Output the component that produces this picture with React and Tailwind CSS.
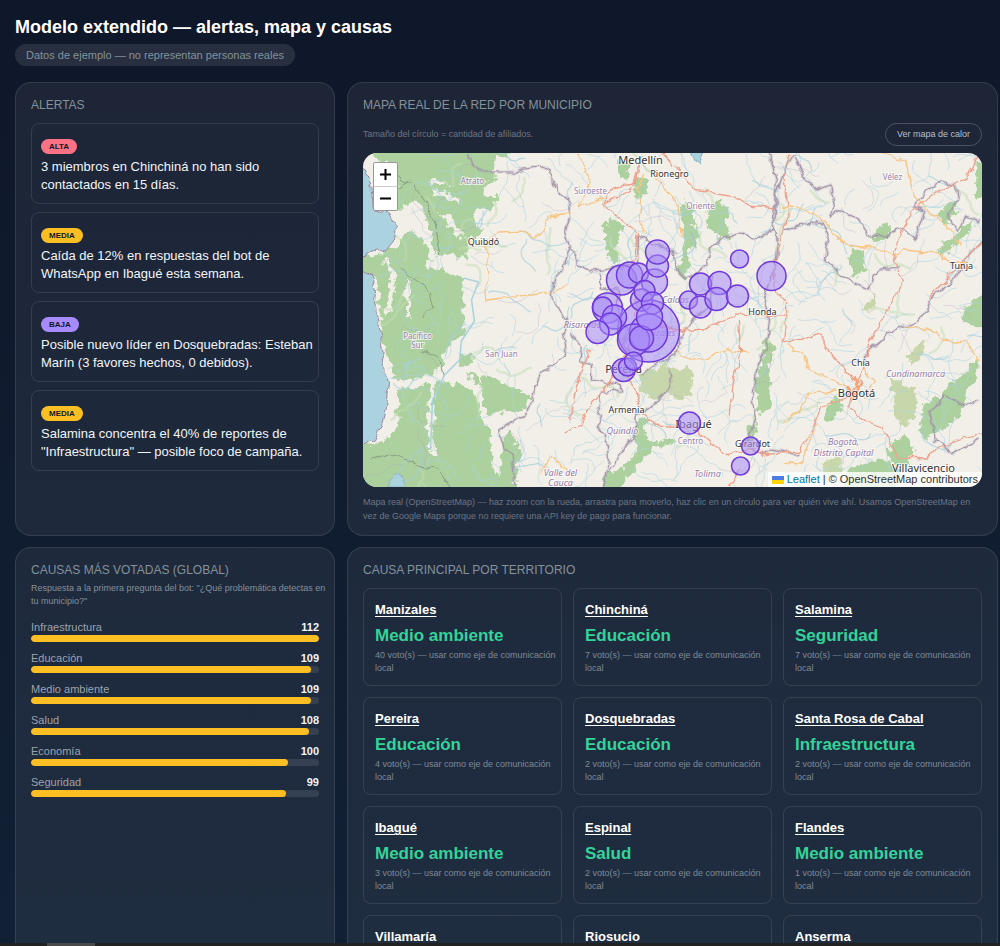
import React from "react";

const ALERTS = [
  { level: "ALTA", tone: "bg-[#fb7185]", text: "3 miembros en Chinchiná no han sido contactados en 15 días." },
  { level: "MEDIA", tone: "bg-[#fbbf24]", text: "Caída de 12% en respuestas del bot de WhatsApp en Ibagué esta semana." },
  { level: "BAJA", tone: "bg-[#a78bfa]", text: "Posible nuevo líder en Dosquebradas: Esteban Marín (3 favores hechos, 0 debidos)." },
  { level: "MEDIA", tone: "bg-[#fbbf24]", text: "Salamina concentra el 40% de reportes de \"Infraestructura\" — posible foco de campaña." },
];

const CAUSES = [
  { label: "Infraestructura", votes: 112 },
  { label: "Educación", votes: 109 },
  { label: "Medio ambiente", votes: 109 },
  { label: "Salud", votes: 108 },
  { label: "Economía", votes: 100 },
  { label: "Seguridad", votes: 99 },
];

const TERRITORIES = [
  { name: "Manizales", cause: "Medio ambiente", votes: 40 },
  { name: "Chinchiná", cause: "Educación", votes: 7 },
  { name: "Salamina", cause: "Seguridad", votes: 7 },
  { name: "Pereira", cause: "Educación", votes: 4 },
  { name: "Dosquebradas", cause: "Educación", votes: 2 },
  { name: "Santa Rosa de Cabal", cause: "Infraestructura", votes: 2 },
  { name: "Ibagué", cause: "Medio ambiente", votes: 3 },
  { name: "Espinal", cause: "Salud", votes: 2 },
  { name: "Flandes", cause: "Medio ambiente", votes: 1 },
  { name: "Villamaría" },
  { name: "Riosucio" },
  { name: "Anserma" },
];

// [x, y, radius]
const MEMBERS = [
  [648, 331, 31], [648, 333, 19], [633, 340, 16], [641, 338, 12], [607, 308, 15],
  [621, 280, 15], [629, 275, 13], [638, 273, 10], [654, 282, 13], [657, 266, 11],
  [657, 252, 12], [641, 300, 11], [644, 291, 10.5], [652, 303, 11], [649, 317, 13],
  [602, 307, 10], [614, 317, 12], [610, 324, 11], [597, 332, 11.5], [623, 370, 11.5],
  [627, 367, 9], [633, 361, 9], [700, 284, 11], [719, 283, 11.5], [688, 300, 9],
  [700, 307, 11], [716, 299, 11.5], [737, 296, 11], [739, 259, 9], [771, 276, 14.5],
  [689, 423, 11], [750, 446, 9], [740, 466, 9],
];

const CITIES = [
  ["Medellín", 640, 164, 11], ["Rionegro", 669, 177, 9], ["Quibdó", 483, 245, 9],
  ["Tunja", 961, 269, 9], ["Honda", 762, 315, 9], ["Chía", 860, 366, 9],
  ["Bogotá", 856, 397, 11], ["Armenia", 626, 413, 9], ["Pereira", 623, 373, 11],
  ["Ibagué", 693, 428, 11], ["Girardot", 752, 447, 9], ["Villavicencio", 923, 472, 11],
];

const REGIONS = [
  ["Atrato", 472, 184], ["Suroeste", 590, 194], ["Oriente", 700, 209], ["Vélez", 892, 180],
  ["Pacífico", 417, 339], ["Sur", 417, 348], ["San Juan", 501, 357], ["Centro", 690, 444],
];

const DEPARTMENTS = [
  ["Caldas", 675, 303], ["Manizales", 655, 336], ["Risaralda", 582, 328], ["Quindío", 622, 434],
  ["Cundinamarca", 915, 377], ["Bogotá,", 843, 445], ["Distrito Capital", 843, 456],
  ["Tolima", 707, 477], ["Valle del", 560, 476], ["Cauca", 560, 486],
];

const SEA = [
  "M358 164 370 182 373 210 388 213 395 227 393 240 385 250 375 251 358 256Z",
  "M358 270 372 276 376 290 375 303 378 320 380 337 382 350 385 375 388 383 385 407 382 423 374 440 358 448Z",
];

const FOREST = [
  "M358 145H508V158L494 159 493 180 482 187V195H498V200L492 202V209L473 210 475 224 482 230 478 237 467 238V260L452 253 438 256 434 249 428 225 423 208 413 200 403 208 395 210 396 180 386 163 376 158Z",
  "M358 257 383 253 393 249 404 237 414 230 421 239 429 245 433 259 423 265 463 278V332L452 345 443 353 440 373 425 380 410 383 393 377 385 350 380 320 377 280 358 270Z",
  "M397 388 418 386 437 380 453 385 470 385 480 403 482 423 489 430 492 467 498 477 503 450 508 430 520 450 515 480V495H355V449L380 441 397 430Z",
  "M483 374 533 397 522 412 483 415 481 399Z",
  "M458 355 472 353V365L459 366Z",
  "M465 371 480 376 482 388 474 384Z",
  "M638 177 648 180 646 196 637 199 633 186Z",
  "M618 158 627 163 628 183 621 178Z",
  "M605 223 618 219 623 229 616 241 619 259 611 267 606 251Z",
  "M684 199 691 205 694 225 699 237 690 250 688 272 683 281 676 273 684 245 680 220Z",
  "M720 199 727 208 726 225 731 238 718 237 705 224 709 210Z",
  "M641 414 647 423 643 435 656 443 643 462 626 478 618 492 603 492 606 474 624 468 637 451 634 432Z",
  "M653 445 668 438 674 441 664 449Z",
  "M765 340 773 346 768 371 772 410 758 415 755 392Z",
  "M745 432 757 420 753 440 746 444Z",
  "M976 161 990 158V202L974 198Z",
  "M951 200 956 212 945 224 936 215Z",
  "M937 250 950 238 965 225 974 221 969 231 951 248 941 255Z",
  "M876 228 888 221 889 236 878 243 873 234Z",
  "M848 248 862 250 866 270 851 279Z",
  "M961 318 969 302 990 290V328L968 325Z",
  "M978 355 968 369 951 382 939 397 923 406 918 431 925 439 944 429 962 412 966 392 976 378Z",
  "M890 446 905 434 914 449 906 465 888 462Z",
  "M845 472 859 464 881 459 901 470 896 492 843 492Z",
  "M833 396 843 402 832 420 824 418Z",
];

const HIGHLANDS = [
  "M641 375 663 366 672 370 687 368 694 378 690 393 677 400 670 395 652 400 640 391Z",
  "M885 377 902 382 918 395 914 419 902 427 894 414 896 397Z",
  "M905 357 924 340 923 355 912 366Z",
  "M824 463 834 456 843 464 832 481 820 480Z",
  "M862 311 874 293 873 309Z",
];

const BORDERS = [
  "M468 153 473 166 485 172 515 172 523 168 540 166 550 170 552 183 557 194 568 197 569 218 565 232 570 246 563 269 552 282 551 297 559 310 568 321 562 333 565 354 551 367 540 374 534 388 532 402 522 416 498 430 503 447 512 456 514 487",
  "M568 246 577 257 578 265 590 271 603 270 637 263 638 237 654 244 673 252 677 269 685 279 696 273 706 265 709 248 721 239 742 232 754 239 774 228 776 195 783 172 794 153",
  "M600 270 600 289 618 290 618 320 630 330 621 344 638 358 650 348",
  "M570 333 581 347 579 361 591 366 591 380 612 383 621 385 621 391 600 392 597 407 602 417 596 428 606 435 608 460 602 487",
  "M640 375 655 364 675 356 679 339 690 322 709 307 713 275",
  "M795 156 803 176 817 190 830 185 834 208 830 217 842 210 860 221 870 236 887 237 898 227 915 238 924 211 913 207 925 191 941 181 956 186 958 200 947 216 957 231 963 216 980 221",
  "M783 231 799 226 820 221 828 241 824 259 841 275 868 289 879 270 899 268",
  "M768 153 776 180 773 216 777 243 773 272 763 300 769 320 765 350 755 370 752 401 755 419 745 445 763 455 772 449 798 455",
  "M668 368 670 383 662 397 646 410 635 414 633 436 616 459 602 480",
  "M982 240 970 253 957 275 930 300 927 311 913 323 896 327 880 343 865 351 863 366",
  "M978 400 964 407 945 395 929 412 935 440 952 454 978 438",
];

const ROADS_ORANGE = [
  "M482 243 487 239 499 233 523 232 532 238 543 233 549 217 570 212",
  "M485 247 487 300 515 296 552 293 568 283",
  "M578 153 589 178 580 208 603 197",
  "M643 175 637 190 642 204 638 221 645 235",
  "M655 179 677 202 681 237",
  "M782 206 804 209 820 218 833 233 845 245 872 248 892 255 904 250 934 253 950 264 966 262",
  "M877 153 904 161 915 196 927 210 948 227 962 247",
  "M676 350 688 359 709 358 728 350 747 353",
  "M782 423 798 413 809 393 836 391",
  "M785 344 806 357 809 370 826 377 846 386",
  "M782 462 801 464 805 450 817 423",
  "M570 475 551 455 539 475",
  "M863 368 874 382 864 400",
  "M905 325 936 331 942 340 966 342 979 361",
];

const ROADS_RED = [
  "M660 153 680 170 692 189 735 196 749 206 774 209",
  "M640 165 632 188 617 197 600 203 622 220 638 233 632 270 637 310 627 350 606 387 590 403 580 425 563 433",
  "M601 204 610 190 632 184 641 156",
  "M790 153 783 175 788 210 781 237 773 270 775 290 786 302 782 340 790 342 820 334 826 350 856 383 846 398 820 406 815 425 799 451 763 455",
  "M658 327 688 331 709 328 735 315 783 316",
  "M622 371 635 388 641 412 654 425 684 427 697 429 715 446 728 456 750 448 763 454",
  "M740 468 730 487",
  "M978 153 965 180 935 192 912 211 900 232 893 254 896 268 904 280 892 302 882 320",
  "M882 320 869 340 863 369 853 390 848 406 863 421 882 427 899 458 927 459 937 448 982 432",
  "M982 239 957 268 928 299",
  "M738 320 740 350 733 382 728 418",
  "M589 350 575 390 570 420",
];

// Small seeded generator so the minor rivers are the same on every render.
function buildStreams(count, seed) {
  let state = seed;
  const next = () => {
    state = (state * 16807) % 2147483647;
    return state / 2147483647;
  };
  return Array.from({ length: count }, () => {
    let x = 398 + next() * 584;
    let y = 153 + next() * 334;
    let angle = next() * Math.PI * 2;
    let path = `M${x.toFixed(1)} ${y.toFixed(1)}`;
    const steps = 4 + Math.floor(next() * 7);
    for (let i = 0; i < steps; i += 1) {
      angle += (next() - 0.5) * 1.5;
      x += Math.cos(angle) * 5;
      y += Math.sin(angle) * 5;
      path += `L${x.toFixed(1)} ${y.toFixed(1)}`;
    }
    return path;
  }).join("");
}

const STREAMS = buildStreams(400, 4177);
const VALLEYS = buildStreams(45, 91);
const TRACKS = buildStreams(45, 733);
const SCRUB = buildStreams(45, 5023);

function Labels({ items, className, size }) {
  return items.map(([name, x, y, own]) => (
    <text className={className} fontSize={own || size} key={`${name}-${x}`} textAnchor="middle" x={x} y={y}>
      {name}
    </text>
  ));
}

function NetworkMap() {
  return (
    <svg
      aria-label="Mapa de afiliados por municipio"
      className="block h-full w-full font-['Noto_Sans',sans-serif]"
      preserveAspectRatio="xMidYMid slice"
      role="img"
      viewBox="362 153 620 334"
    >
      <defs>
        <filter id="terrain" filterUnits="userSpaceOnUse" height="360" width="650" x="350" y="140">
          <feTurbulence baseFrequency="0.13" numOctaves="3" seed="8" type="fractalNoise" />
          <feDisplacementMap in="SourceGraphic" scale="13" xChannelSelector="R" yChannelSelector="G" />
        </filter>
        <filter id="wobble" filterUnits="userSpaceOnUse" height="360" width="650" x="350" y="140">
          <feTurbulence baseFrequency="0.1" numOctaves="2" seed="3" type="fractalNoise" />
          <feDisplacementMap in="SourceGraphic" scale="8" xChannelSelector="R" yChannelSelector="G" />
        </filter>
      </defs>
      <rect fill="#f2efe9" height="334" width="620" x="362" y="153" />
      <g filter="url(#terrain)">
        <path d={FOREST.join("")} fill="#add19e" />
        <path d={HIGHLANDS.join("")} fill="#c8d7ab" />
        <path
          d="M430 183 445 182M433 193 447 195 457 201M440 213 453 225 462 238M412 220 425 240 431 259M408 280V317M440 365 433 380 430 410 431 455M397 384 440 376 455 370 475 389 484 417M386 260 393 280 387 315M388 385 395 395 387 425 380 440"
          fill="none"
          stroke="#f2efe9"
          strokeWidth="5"
        />
      </g>
      <g fill="none" strokeLinejoin="round">
        <path d={SCRUB} opacity="0.5" stroke="#c2ddb2" strokeWidth="2.5" />
        <path d={STREAMS} opacity="0.6" stroke="#aad3df" strokeWidth="0.9" />
        <path d={VALLEYS} opacity="0.7" stroke="#a3cfdc" strokeWidth="1.2" />
        <path d="M463 278 478 282 471 300 474 321 461 341 459 360 444 375 432 400 430 450" stroke="#aad3df" strokeWidth="1.6" />
        <path d={TRACKS} opacity="0.35" stroke="#a898b2" strokeWidth="0.8" />
      </g>
      <g filter="url(#wobble)">
        <path d={SEA.join("")} fill="#aad3df" stroke="#9a86a4" strokeWidth="1" />
        <path d="M388 482 395 475 403 478 404 487H387ZM691 153H702L699 163 693 159Z" fill="#aad3df" stroke="#8fb2c0" />
        <g fill="none" strokeLinejoin="round">
          <path
            d="M388 165 398 178 413 185 425 203 433 220 439 253M396 190 410 180M370 460 382 457 396 453 416 465 439 470 450 487M400 268 425 288 433 306 421 318M421 350 437 357 443 375"
            stroke="#879f82"
            strokeWidth="1"
          />
          <path d={BORDERS.join("")} opacity="0.25" stroke="#9b8ba5" strokeWidth="3" />
          <path d={BORDERS.join("")} stroke="#a396aa" strokeWidth="1.1" />
          <path d={ROADS_ORANGE.join("")} stroke="#f8c583" strokeWidth="1.3" />
          <path d={ROADS_RED.join("")} stroke="#eea089" strokeWidth="1.3" />
          <path d="M854 377 858 389 851 398 847 388 855 394 861 380" stroke="#f4a173" strokeWidth="2.5" />
        </g>
      </g>
      <g paintOrder="stroke" stroke="#ffffff" strokeOpacity="0.7" strokeWidth="2">
        <Labels className="fill-[#9a82ab]" items={REGIONS} size={8} />
        <Labels className="fill-[#957aa8] italic" items={DEPARTMENTS} size={9} />
        <Labels className="fill-[#333333]" items={CITIES} />
      </g>
      <g fill="#a78bfa" fillOpacity="0.55" stroke="#7039dc" strokeWidth="1.5">
        {MEMBERS.map(([x, y, r]) => (
          <circle cx={x} cy={y} key={`${x}-${y}`} r={r} />
        ))}
      </g>
    </svg>
  );
}

function Panel({ title, children }) {
  return (
    <section className="flex min-w-0 flex-col rounded-2xl border border-white/10 bg-white/6 px-[15px] pt-[14px] pb-3">
      <h2 className="text-xs leading-4 text-[#84929a] uppercase">{title}</h2>
      {children}
    </section>
  );
}

export default function App() {
  const maxVotes = Math.max(...CAUSES.map((cause) => cause.votes));

  return (
    <div className="flex h-screen flex-col bg-linear-to-b from-[#0f172a] to-[#112035] font-['Liberation_Sans',Arial,sans-serif] text-[#f1f5f9]">
      <main className="min-h-0 flex-1 overflow-hidden pt-4 pr-0.5 pl-[15px]">
        <h1 className="text-lg leading-[22px] font-bold text-white">Modelo extendido — alertas, mapa y causas</h1>
        <p className="mt-1.5 w-fit rounded-full bg-white/10 px-[11px] text-[11px] leading-[22px] text-[#84929a]">
          Datos de ejemplo — no representan personas reales
        </p>

        <div className="mt-4 grid grid-cols-[minmax(0,320fr)_minmax(0,651fr)] gap-x-3 gap-y-[11px]">
          <Panel title="Alertas">
            <ul className="mt-2.5 flex flex-col gap-2">
              {ALERTS.map((alert) => (
                <li className="rounded-lg border border-white/10 pt-[15px] pr-px pb-[9px] pl-[9px]" key={alert.text}>
                  <span className={`block w-fit rounded-full px-2 text-[8px] leading-[15px] font-bold text-[#111827] ${alert.tone}`}>
                    {alert.level}
                  </span>
                  <p className="mt-1 text-[13px] leading-[18px]">{alert.text}</p>
                </li>
              ))}
            </ul>
          </Panel>

          <Panel title="Mapa real de la red por municipio">
            <div className="mt-2.5 flex items-center justify-between">
              <p className="text-[9px] text-[#6b7684]">Tamaño del círculo = cantidad de afiliados.</p>
              <button className="rounded-full border border-white/20 px-[11px] text-[9px] leading-[21px] text-[#b6c0cc]" type="button">
                Ver mapa de calor
              </button>
            </div>
            <div className="relative mt-[7px] h-[334px] overflow-hidden rounded-[14px]">
              <NetworkMap />
              <div className="absolute top-[9px] left-[10px] flex w-[25px] flex-col overflow-hidden rounded-xs border border-[#999999] bg-white text-black">
                <button aria-label="Acercar" className="flex h-6 items-center justify-center border-b border-[#cccccc]" type="button">
                  <svg aria-hidden="true" className="size-[11px]" viewBox="0 0 11 11">
                    <path d="M5.5 0V11M0 5.5H11" stroke="currentColor" strokeWidth="2" />
                  </svg>
                </button>
                <button aria-label="Alejar" className="flex h-[23px] items-center justify-center" type="button">
                  <svg aria-hidden="true" className="size-[11px]" viewBox="0 0 11 11">
                    <path d="M0 5.5H11" stroke="currentColor" strokeWidth="2" />
                  </svg>
                </button>
              </div>
              <p className="absolute right-0 bottom-0 flex items-center gap-[3px] bg-white/80 px-1 text-[11px] leading-[15px] text-[#333333]">
                <svg aria-hidden="true" className="h-2 w-3" viewBox="0 0 12 8">
                  <path d="M0 0H12V4H0Z" fill="#4c7be1" />
                  <path d="M0 4H12V8H0Z" fill="#ffd500" />
                </svg>
                <a className="text-[#0078a8]" href="https://leafletjs.com">Leaflet</a>
                <span>| © OpenStreetMap contributors</span>
              </p>
            </div>
            <p className="mt-2 text-[9px] leading-[14px] text-[#6b7684]">
              Mapa real (OpenStreetMap) — haz zoom con la rueda, arrastra para moverlo, haz clic en un círculo para ver quién
              vive ahí. Usamos OpenStreetMap en vez de Google Maps porque no requiere una API key de pago para funcionar.
            </p>
          </Panel>

          <Panel title="Causas más votadas (global)">
            <p className="mt-1 -mr-3 text-[9px] leading-[13px] text-[#84929a]">
              Respuesta a la primera pregunta del bot: "¿Qué problemática detectas en tu municipio?"
            </p>
            <ul className="mt-[11px] flex flex-col gap-2">
              {CAUSES.map((cause) => (
                <li key={cause.label}>
                  <div className="flex justify-between text-[11px] leading-4 text-[#9ca3ad]">
                    <span>{cause.label}</span>
                    <strong className="text-[#f1f5f9]">{cause.votes}</strong>
                  </div>
                  <div className="h-[7px] overflow-hidden rounded-full bg-white/10">
                    <div className="h-full rounded-full bg-[#fbbf24]" style={{ width: `${(cause.votes / maxVotes) * 100}%` }} />
                  </div>
                </li>
              ))}
            </ul>
          </Panel>

          <Panel title="Causa principal por territorio">
            <div className="mt-2.5 grid grid-cols-3 gap-[11px]">
              {TERRITORIES.map((territory) => (
                <article className="rounded-lg border border-white/10 pt-[13px] pr-0.5 pb-[10px] pl-[11px]" key={territory.name}>
                  <h3 className="text-[13px] leading-4 font-bold text-white">
                    <a className="underline underline-offset-2" href={`#${territory.name}`}>{territory.name}</a>
                  </h3>
                  {territory.cause && (
                    <>
                      <p className="mt-2 text-[17px] leading-5 font-bold text-[#34d399]">{territory.cause}</p>
                      <p className="mt-[3px] text-[9px] leading-[13px] text-[#7f8a96]">
                        {`${territory.votes} voto(s) — usar como eje de comunicación local`}
                      </p>
                    </>
                  )}
                </article>
              ))}
            </div>
          </Panel>
        </div>
      </main>
      <div aria-hidden="true" className="h-[3px] shrink-0 bg-[#222222] pl-[47px]">
        <div className="h-full w-12 bg-[#4a4a4a]" />
      </div>
    </div>
  );
}
